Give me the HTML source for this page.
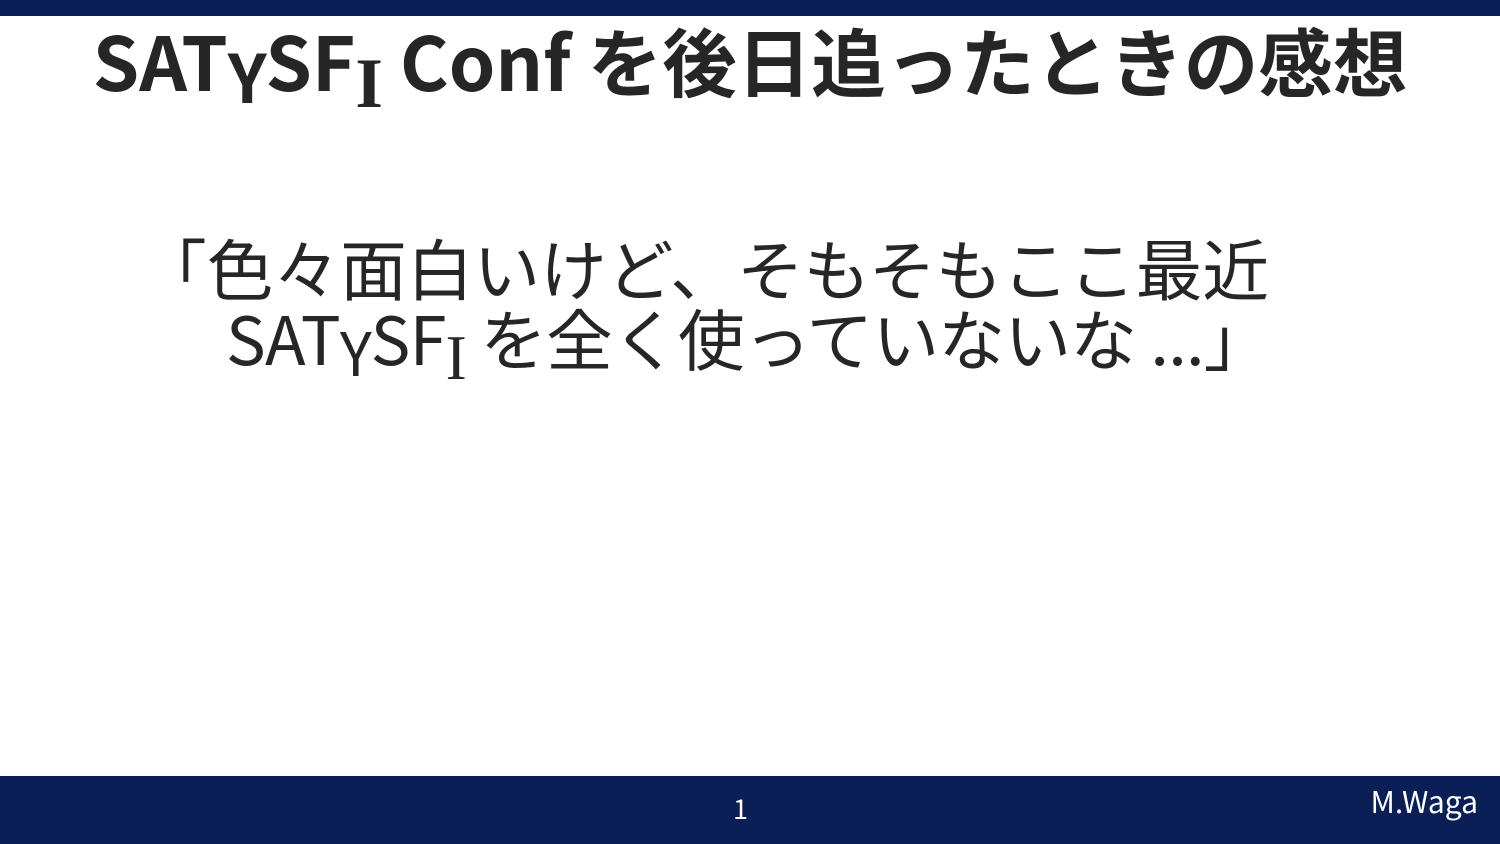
<!DOCTYPE html>
<html><head><meta charset="utf-8"><style>
body{margin:0;width:1500px;height:844px;background:#fff;position:relative;overflow:hidden;font-family:"Noto Sans CJK JP","Liberation Sans",sans-serif;color:#262626}
.top{position:absolute;left:0;top:0;width:1500px;height:16px;background:#0b1f57}
.foot{position:absolute;left:0;top:776px;width:1500px;height:68px;background:#0b1f57;color:#fff}
.t{position:absolute;white-space:nowrap}
.y{font-size:0.9em;position:relative;top:0.18em;letter-spacing:-0.02em}
.i{font-family:"Liberation Serif",serif;position:relative;top:0.22em;font-size:0.95em}
</style></head><body>
<div class="top"></div>
<div class="t" style="left:0;width:1500px;text-align:center;top:12px;font-size:74.5px;font-weight:bold;line-height:96px">SAT<span class="y">Y</span>SF<span class="i">I</span> Conf を後日追ったときの感想</div>
<div class="t" style="left:140px;top:225px;font-size:66.7px;line-height:84px">「色々面白いけど、そもそもここ最近</div>
<div class="t" style="left:226px;top:295px;font-size:66.7px;line-height:84px;letter-spacing:-0.75px">SAT<span class="y">Y</span>SF<span class="i" style="font-weight:normal">I</span> を全く使っていないな ...」</div>
<div class="foot">
<div class="t" style="left:733px;top:14px;font-size:27px;line-height:36px">1</div>
<div class="t" style="right:22px;top:5px;font-size:30px;line-height:38px">M.Waga</div>
</div>
</body></html>
